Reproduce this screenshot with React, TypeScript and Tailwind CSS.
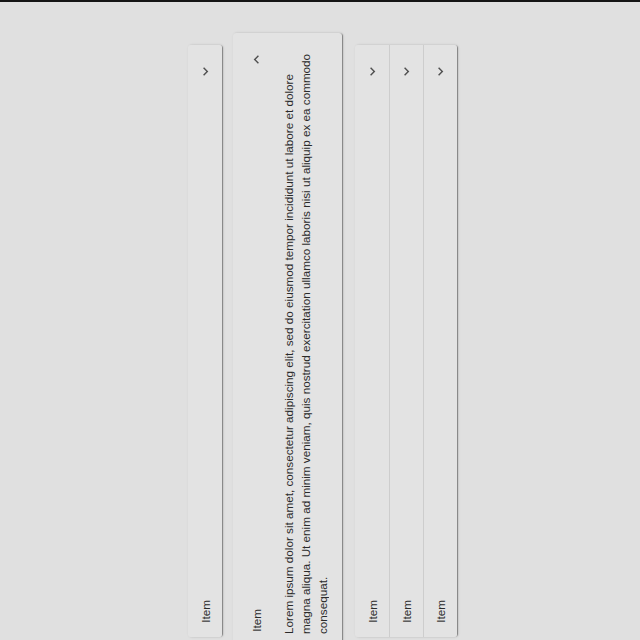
import React from 'react';

const Chevron = ({ open }: { open?: boolean }) => (
    <svg width="17" height="17" viewBox="0 0 24 24" className="text-[#505050] shrink-0">
        {open ? (
            <path fill="currentColor" d="M15.41 7.41 14 6l-6 6 6 6 1.41-1.41L10.83 12z" />
        ) : (
            <path fill="currentColor" d="M8.59 16.59 13.17 12 8.59 7.41 10 6l6 6-6 6z" />
        )}
    </svg>
);

const VText = ({ children, className = '' }: { children: React.ReactNode; className?: string }) => (
    <div className={`[writing-mode:vertical-rl] rotate-180 ${className}`}>{children}</div>
);

const shadow = 'shadow-[2px_0_1px_-1px_rgba(0,0,0,0.25),1px_0_1px_0_rgba(0,0,0,0.16),1px_0_3px_0_rgba(0,0,0,0.12)]';

function Collapsed({ divider, rounded }: { divider?: boolean; rounded: string }) {
    return (
        <div className={`relative h-[592px] w-[34px] bg-[#e3e3e3] flex flex-col items-center justify-between pt-[18px] pb-[14px] ${rounded} ${divider ? 'border-l border-[#cdcdcd]' : ''}`}>
            <Chevron />
            <VText className="text-[11.7px] leading-[17px] text-[#2a2a2a]">Item</VText>
        </div>
    );
}

export default function App() {
    return (
        <div className="w-[640px] h-[640px] overflow-hidden bg-[#e0e0e0] border-t-2 border-[#151515] font-['Liberation_Sans',Arial,sans-serif]">
            <div className="flex items-start pl-[188px] pt-[31px]">
                {/* first item */}
                <div className={`mt-[12px] rounded-[3px] ${shadow}`}>
                    <Collapsed rounded="rounded-[3px]" />
                </div>

                {/* expanded item */}
                <div className={`ml-[11px] h-[612px] w-[109px] bg-[#e3e3e3] rounded-[3px] flex ${shadow}`}>
                    <div className="w-[47px] flex flex-col items-center justify-between pt-[18px] pb-[13px]">
                        <Chevron open />
                        <VText className="text-[11.7px] leading-[17px] text-[#2a2a2a]">Item</VText>
                    </div>
                    <div className="flex flex-col justify-end pb-[11px]">
                        <VText className="h-[582px] text-[11.7px] leading-[17px] text-[#2a2a2a]">
                            Lorem ipsum dolor sit amet, consectetur adipiscing elit, sed do eiusmod tempor incididunt ut labore et dolore magna aliqua. Ut enim ad minim veniam, quis nostrud exercitation ullamco laboris nisi ut aliquip ex ea commodo consequat.
                        </VText>
                    </div>
                </div>

                {/* remaining items */}
                <div className={`ml-[13px] mt-[12px] flex rounded-[3px] ${shadow}`}>
                    <Collapsed rounded="rounded-l-[3px]" />
                    <Collapsed divider rounded="" />
                    <Collapsed divider rounded="rounded-r-[3px]" />
                </div>
            </div>
        </div>
    );
}
